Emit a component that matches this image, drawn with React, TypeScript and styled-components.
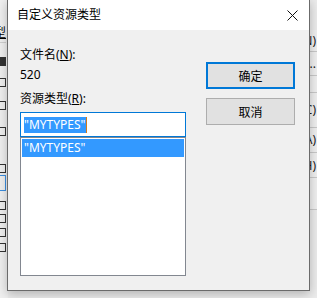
import React from "react";
import styled, { createGlobalStyle } from "styled-components";

const GlobalStyle = createGlobalStyle`
  html, body {
    margin: 0;
    padding: 0;
    background: #f0f0f0;
  }
  body {
    font-family: "Noto Sans", "Noto Sans CJK SC", sans-serif;
    font-size: 12px;
    color: #000;
  }
`;

const Screen = styled.div`
  position: relative;
  width: 317px;
  height: 298px;
  overflow: hidden;
  background: #ececec;
`;

/* ---- the window behind the dialog ---- */

const BackLeft = styled.div`
  position: absolute;
  left: -40px;
  top: 0;
  width: 48px;
  height: 298px;
  background: #f0f0f0;
  display: flex;
  flex-direction: column;
  align-items: flex-end;
  padding-right: 2px;
  box-sizing: border-box;
`;

const BackCaption = styled.div`
  margin-top: 26px;
  height: 14px;
  line-height: 14px;
  font-size: 12px;
  text-decoration: underline;
  white-space: nowrap;
  border-bottom: 1px solid #d0d0d0;
  padding-bottom: 2px;
`;

const BackBox = styled.div<{ $top: number; $filled?: boolean; $blue?: boolean }>`
  margin-top: ${(p) => p.$top}px;
  width: ${(p) => (p.$blue ? 8 : 7)}px;
  height: ${(p) => (p.$blue ? 16 : 9)}px;
  box-sizing: border-box;
  border: 1px solid ${(p) => (p.$blue ? "#3b8ee0" : "#333")};
  background: ${(p) => (p.$filled ? "#333" : "transparent")};
`;

const BackRight = styled.div`
  position: absolute;
  left: 290px;
  top: 30px;
  width: 27px;
  height: 180px;
  background: #f0f0f0;
  display: flex;
  flex-direction: column;
`;

const BackRow = styled.div<{ $h: number }>`
  height: ${(p) => p.$h}px;
  border-bottom: 1px solid #c9c9c9;
  display: flex;
  align-items: center;
  justify-content: flex-end;
  padding-right: 1px;
  font-size: 12px;
  color: #1a1a1a;
  white-space: nowrap;
`;

/* ---- the dialog ---- */

const Dialog = styled.div`
  position: absolute;
  left: 7px;
  top: -1px;
  width: 303px;
  height: 292px;
  box-sizing: border-box;
  border: 1px solid #6b6b6b;
  background: #f0f0f0;
  box-shadow: 0 3px 10px rgba(0, 0, 0, 0.25);
  display: flex;
  flex-direction: column;
`;

const TitleBar = styled.div`
  height: 30px;
  flex: none;
  background: #fff;
  display: flex;
  align-items: center;
  justify-content: space-between;
  padding: 0 11px 0 9px;
`;

const Title = styled.span`
  font-size: 12px;
  line-height: 16px;
`;

const CloseIcon = styled.svg`
  width: 11px;
  height: 11px;
  display: block;
  margin-top: 1px;
`;

const Body = styled.div`
  flex: 1;
  display: flex;
  gap: 20px;
  padding: 15px 14px 14px 12px;
  min-height: 0;
`;

const LeftColumn = styled.div`
  width: 166px;
  display: flex;
  flex-direction: column;
`;

const Label = styled.div<{ $gap?: number }>`
  height: 20px;
  line-height: 20px;
  margin-top: ${(p) => p.$gap || 0}px;
  white-space: nowrap;
`;

const Key = styled.span`
  text-decoration: underline;
`;

const TextBox = styled.div`
  margin-top: 3px;
  height: 25px;
  flex: none;
  box-sizing: border-box;
  border: 1px solid #0078d7;
  background: #fff;
  display: flex;
  align-items: center;
  padding-left: 3px;
`;

const Selected = styled.span`
  background: #3399ff;
  color: #fff;
  line-height: 16px;
  height: 16px;
  padding-right: 1px;
`;

const Caret = styled.span`
  width: 1px;
  height: 16px;
  background: #d2791b;
`;

const ListBox = styled.div`
  flex: 1;
  box-sizing: border-box;
  border: 1px solid #828790;
  background: #fff;
  padding: 1px;
`;

const ListItem = styled.div<{ $active?: boolean }>`
  height: 18px;
  line-height: 18px;
  padding-left: 2px;
  background: ${(p) => (p.$active ? "#3399ff" : "transparent")};
  color: ${(p) => (p.$active ? "#fff" : "#000")};
`;

const RightColumn = styled.div`
  width: 89px;
  padding-top: 17px;
  display: flex;
  flex-direction: column;
  gap: 9px;
`;

const Button = styled.button<{ $default?: boolean }>`
  height: 27px;
  width: 89px;
  box-sizing: border-box;
  margin: 0;
  padding: 0;
  background: #e1e1e1;
  border: ${(p) => (p.$default ? "2px solid #0078d7" : "1px solid #adadad")};
  font-family: "Noto Sans CJK SC", "Noto Sans", sans-serif;
  font-size: 12px;
  color: #000;
  line-height: 16px;
`;

const backRows = [
  { h: 22, text: "(N)" },
  { h: 23, text: "(P)..." },
  { h: 17, text: "" },
  { h: 35, text: "(C)" },
  { h: 25, text: "(A)" },
  { h: 25, text: "(H)" },
  { h: 32, text: "" },
];

const backBoxes = [
  { top: 14, filled: true },
  { top: 12 },
  { top: 14 },
  { top: 17 },
  { top: 28 },
  { top: 2, blue: true },
  { top: 10 },
  { top: 4 },
  { top: 5 },
  { top: 6 },
];

export default function App() {
  return (
    <>
      <GlobalStyle />
      <Screen>
        <BackLeft>
          <BackCaption>类型</BackCaption>
          {backBoxes.map((b, i) => (
            <BackBox key={i} $top={b.top} $filled={b.filled} $blue={b.blue} />
          ))}
        </BackLeft>
        <BackRight>
          {backRows.map((r, i) => (
            <BackRow key={i} $h={r.h}>
              {r.text}
            </BackRow>
          ))}
        </BackRight>

        <Dialog>
          <TitleBar>
            <Title>自定义资源类型</Title>
            <CloseIcon viewBox="0 0 11 11">
              <path d="M0.5 0.5 L10.5 10.5 M10.5 0.5 L0.5 10.5" stroke="#111" strokeWidth="1" fill="none" />
            </CloseIcon>
          </TitleBar>
          <Body>
            <LeftColumn>
              <Label>
                文件名(<Key>N</Key>):
              </Label>
              <Label>520</Label>
              <Label $gap={4}>
                资源类型(<Key>R</Key>):
              </Label>
              <TextBox>
                <Selected>"MYTYPES"</Selected>
                <Caret />
              </TextBox>
              <ListBox>
                <ListItem $active>"MYTYPES"</ListItem>
              </ListBox>
            </LeftColumn>
            <RightColumn>
              <Button $default>确定</Button>
              <Button>取消</Button>
            </RightColumn>
          </Body>
        </Dialog>
      </Screen>
    </>
  );
}
